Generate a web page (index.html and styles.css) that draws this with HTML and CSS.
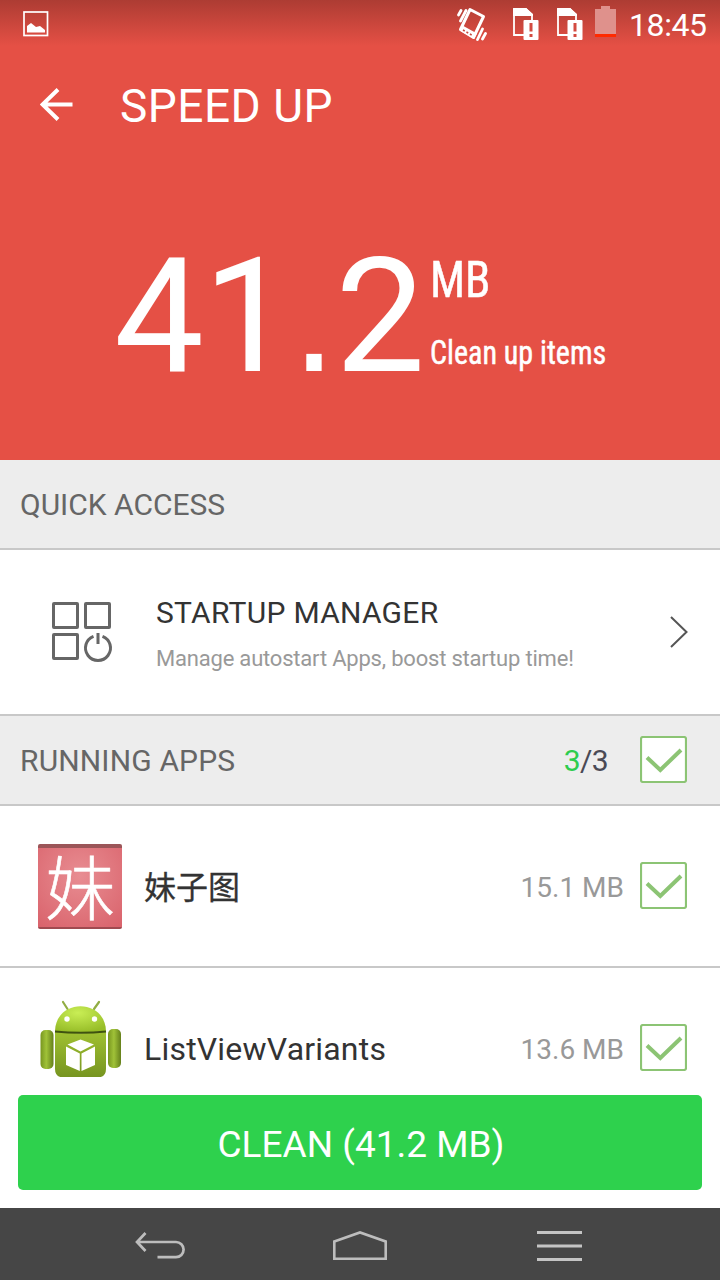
FILE: index.html
```html
<!DOCTYPE html>
<html lang="en">
<head>
    <meta charset="UTF-8">
    <meta name="viewport" content="width=device-width, initial-scale=1.0">
    <title>Speed Up</title>
    <link rel="stylesheet" href="styles.css">
</head>
<body>
    <!-- Check mark shared by all the checkboxes -->
    <svg class="defs" width="0" height="0">
        <symbol id="check" viewBox="0 0 47 47">
            <rect x="1" y="1" width="45" height="45" rx="2" fill="#fff" stroke="#8cc474" stroke-width="2.2"/>
            <path d="M7 21.5L20.3 34L41 14" fill="none" stroke="#8cc474" stroke-width="4"/>
        </symbol>
    </svg>

    <header class="top">
        <div class="status">
            <svg class="picture" width="26" height="26" viewBox="0 0 26 26">
                <rect x="1" y="1" width="23.5" height="23.5" fill="none" stroke="#fff" stroke-width="1.7"/>
                <path d="M4 21.5V15L8 12L13 16L17 15L22 19V21.5Z" fill="#fff"/>
            </svg>
            <svg class="vibrate" width="30" height="36" viewBox="0 0 30 36">
                <path d="M13 2.500L26.500 9.500L16.500 30.500L3.500 22.500Z" fill="none" stroke="#fff" stroke-width="3" stroke-linejoin="round"/>
                <path d="M5.500 18.500L20 26.500L17 32L2.500 23.500Z" fill="#fff"/>
                <path d="M6 23L15.500 28.500" stroke="#c8493f" stroke-width="1.500" stroke-dasharray="2 2"/>
                <path d="M1.500 8L4 3.500M3.500 14L9 3.500M20.500 32.500L25.500 22M25.500 32L28.500 26.500" stroke="#fff" stroke-width="2.800" stroke-linecap="round"/>
            </svg>
            <svg class="sim" width="26" height="33" viewBox="0 0 26 33">
                <path d="M1 28V2H13L19 8V28Z" fill="none" stroke="#fff" stroke-width="1.8"/>
                <path d="M0 2Q0 1 2 1H13L20 7V9H0Z" fill="#fff"/>
                <rect x="10.500" y="13" width="15" height="20" rx="1" fill="#fff"/>
                <path d="M18 16V24.500M18 27V30" stroke="#d34b41" stroke-width="3"/>
            </svg>
            <svg class="sim" width="26" height="33" viewBox="0 0 26 33">
                <path d="M1 28V2H13L19 8V28Z" fill="none" stroke="#fff" stroke-width="1.8"/>
                <path d="M0 2Q0 1 2 1H13L20 7V9H0Z" fill="#fff"/>
                <rect x="10.500" y="13" width="15" height="20" rx="1" fill="#fff"/>
                <path d="M18 16V24.500M18 27V30" stroke="#d34b41" stroke-width="3"/>
            </svg>
            <svg class="battery" width="21" height="31" viewBox="0 0 21 31">
                <path d="M0 3H6V0H15V3H21V28H0Z" fill="#df918c"/>
                <rect y="28" width="21" height="3" fill="#ff2a00"/>
            </svg>
            <span class="clock">18:45</span>
        </div>

        <div class="title-bar">
            <svg width="33" height="33" viewBox="0 0 33 33">
                <path d="M18 1.500L2.500 16.500L18 31.500M2.500 16.500H32.500" fill="none" stroke="#fff" stroke-width="4"/>
            </svg>
            <h1>SPEED UP</h1>
        </div>

        <div class="summary">
            <span class="amount">41<span class="point">.</span>2</span>
            <div class="labels">
                <span class="unit">MB</span>
                <span class="caption">Clean up items</span>
            </div>
        </div>
    </header>

    <main>
        <div class="section">
            <h2>QUICK ACCESS</h2>
        </div>

        <div class="startup">
            <svg class="startup-icon" width="62" height="62" viewBox="0 0 62 62" fill="none" stroke="#666" stroke-width="3">
                <rect x="1.500" y="2.500" width="24" height="24" rx=".5"/>
                <rect x="33.500" y="2.500" width="24" height="24" rx=".5"/>
                <rect x="1.500" y="33.500" width="24" height="24" rx=".5"/>
                <path d="M41.500 35.300A12.500 12.500 0 1 0 50.500 35.300M46 32V43"/>
            </svg>
            <div class="startup-text">
                <h3>STARTUP MANAGER</h3>
                <p>Manage autostart Apps, boost startup time!</p>
            </div>
            <svg width="18" height="32" viewBox="0 0 18 32">
                <path d="M1 1L16.500 16L1 31" fill="none" stroke="#555" stroke-width="2"/>
            </svg>
        </div>

        <div class="section running">
            <h2>RUNNING APPS</h2>
            <span class="count"><b>3</b>/3</span>
            <svg class="check"><use href="#check"/></svg>
        </div>

        <div class="app">
            <div class="app-icon meizi">妹</div>
            <span class="name name-cjk">妹子图</span>
            <span class="size">15.1 MB</span>
            <svg class="check"><use href="#check"/></svg>
        </div>

        <div class="app">
            <svg class="app-icon" width="84" height="84" viewBox="0 3 84 84">
                <defs>
                    <linearGradient id="body" x1="0" y1="0" x2="0" y2="1">
                        <stop offset="0" stop-color="#a0c131"/>
                        <stop offset="1" stop-color="#769420"/>
                    </linearGradient>
                    <radialGradient id="head" cx=".45" cy=".25" r=".75">
                        <stop offset="0" stop-color="#c9ee55"/>
                        <stop offset="1" stop-color="#97bd28"/>
                    </radialGradient>
                    <linearGradient id="arm" x1="0" y1="0" x2="1" y2="0">
                        <stop offset="0" stop-color="#789620"/>
                        <stop offset=".45" stop-color="#a0c238"/>
                        <stop offset="1" stop-color="#65801b"/>
                    </linearGradient>
                </defs>
                <path d="M25 -1L29.500 6M61 -1L56 6" stroke="#91ad43" stroke-width="2.2" stroke-linecap="round"/>
                <path d="M17 28C18 -5 67 -5 68 28Q43 31 17 28Z" fill="url(#head)"/>
                <circle cx="29" cy="16" r="2.700" fill="#fff"/>
                <circle cx="56.500" cy="16" r="2.700" fill="#fff"/>
                <rect x="2.500" y="27" width="13" height="39" rx="5" fill="url(#arm)"/>
                <rect x="70" y="26" width="13" height="39" rx="5" fill="url(#arm)"/>
                <path d="M17 28.500Q43 32 68 28.500V66Q68 74.500 59 74.500H26Q17 74.500 17 66Z" fill="url(#body)"/>
                <path d="M17 28.500Q43 31 68 28.500" fill="none" stroke="#3f5210" stroke-width="2"/>
                <path d="M29.500 41.500L42.500 36.500L56 41.500L42.500 48.500ZM28 43.500L41.800 50.500V68L28 62ZM43.500 50.500L57 43.500V62L43.500 68Z" fill="#fff"/>
            </svg>
            <span class="name">ListViewVariants</span>
            <span class="size">13.6 MB</span>
            <svg class="check"><use href="#check"/></svg>
        </div>
    </main>

    <div class="action">
        <button class="clean">CLEAN (41.2 MB)</button>
    </div>

    <nav class="nav">
        <svg width="51" height="30" viewBox="0 0 51 30">
            <path d="M10.500 2L2 11L10.500 20M2 11H41A7.600 7.600 0 0 1 41 26.200H22.500" fill="none" stroke="#bdbdbd" stroke-width="2.700"/>
        </svg>
        <svg class="home" width="54" height="30" viewBox="0 0 54 30">
            <path d="M1.300 10.500L27 1.500L52.700 10.500V27.700H1.300Z" fill="none" stroke="#bdbdbd" stroke-width="2.600"/>
        </svg>
        <svg width="45" height="32" viewBox="0 0 45 32">
            <path d="M0 2.500H45M0 16H45M0 29.500H45" stroke="#c4c4c4" stroke-width="3"/>
        </svg>
    </nav>
</body>
</html>
```

FILE: styles.css
```css
* {
    box-sizing: border-box;
}

body {
    display: flex;
    flex-direction: column;
    width: 720px;
    height: 1280px;
    margin: 0;
    overflow: hidden;
    background: #fff;
    font-family: Roboto, "Noto Sans CJK SC", sans-serif;
}

h1, h2, h3, p {
    margin: 0;
    font-weight: 400;
    white-space: nowrap;
}

svg {
    display: block;
    flex: none;
}

.defs {
    position: absolute;
}

/* Red header */
.top {
    height: 460px;
    flex: none;
    color: #fff;
    background: linear-gradient(#ad3c33 0, #e55045 46px, #e55045 100%);
}

.status {
    display: flex;
    height: 50px;
    padding: 7px 12px 0 23px;
}

.picture {
    margin: 4px auto 0 0;
}

.vibrate {
    margin-right: 26px;
}

.sim {
    margin: 0 18px 0 0;
}

.sim + .battery {
    margin: -1px 13px 0 -6px;
}

.clock {
    width: 79px;
    font-size: 32px;
    line-height: 36px;
    letter-spacing: -.4px;
    white-space: nowrap;
}

.title-bar {
    display: flex;
    align-items: center;
    height: 108px;
    padding-left: 40px;
}

.title-bar h1 {
    margin-left: 47px;
    padding-top: 3px;
    font-size: 46px;
    letter-spacing: .5px;
}

.summary {
    display: flex;
    padding: 64px 0 0 114px;
}

.amount {
    width: 316px;
    font-size: 160px;
    line-height: 190px;
    letter-spacing: -1px;
}

.point {
    font-family: "Liberation Sans", sans-serif;
    line-height: 1;
}

.labels {
    display: flex;
    flex-direction: column;
    align-items: flex-start;
    padding-top: 28px;
}

.unit, .caption {
    font-family: "Roboto Condensed", Roboto, sans-serif;
    white-space: nowrap;
    transform-origin: left;
    -webkit-text-stroke: .5px #fff;
}

.unit {
    font-size: 50px;
    line-height: 60px;
    transform: scaleX(.93);
}

.caption {
    margin-top: 23px;
    font-size: 33px;
    line-height: 40px;
    transform: scaleX(.91);
}

/* Lists */
main {
    height: 617px;
    flex: none;
    overflow: hidden;
}

.section {
    display: flex;
    align-items: center;
    height: 90px;
    padding: 0 33px 0 20px;
    background: #ededed;
    border-bottom: 2px solid #c8c8c8;
}

.section h2 {
    flex: 1;
    font-size: 30px;
    color: #666;
}

.running h2 {
    letter-spacing: .15px;
}

.startup {
    display: flex;
    align-items: center;
    height: 166px;
    padding: 0 32px 0 52px;
    border-bottom: 2px solid #c8c8c8;
}

.startup-text {
    flex: 1;
    padding: 6px 0 0 42px;
}

.startup-text h3 {
    font-size: 30px;
    line-height: 40px;
    letter-spacing: .28px;
    color: #333;
}

.startup-text p {
    margin-top: 8px;
    font-size: 22px;
    line-height: 36px;
    letter-spacing: -.2px;
    color: #999;
}

.count {
    margin-right: 32px;
    font-size: 30px;
    letter-spacing: -.6px;
    color: #4a4a55;
}

.count b {
    font-weight: 400;
    color: #2ecc4e;
}

.check {
    width: 47px;
    height: 47px;
    margin-bottom: 2px;
}

.app {
    display: flex;
    align-items: center;
    height: 162px;
    padding: 0 33px 0 38px;
    border-bottom: 2px solid #c8c8c8;
}

.app-icon {
    width: 84px;
    height: 84px;
    overflow: visible;
}

.meizi {
    height: 85px;
    border-top: 4px solid #9b5558;
    border-bottom: 2px solid #a04a50;
    border-radius: 2px;
    background: radial-gradient(circle at 50% 35%, #e88d92, #d9626b);
    color: #fff;
    font-family: "Noto Sans CJK SC", sans-serif;
    font-size: 70px;
    font-weight: 300;
    line-height: 73px;
    text-align: center;
    -webkit-text-stroke: .6px #fff;
}

.name {
    flex: 1;
    margin-left: 22px;
    padding-top: 2px;
    font-size: 32px;
    letter-spacing: .2px;
    color: #333;
}

.name-cjk {
    padding: 0 0 3px;
    letter-spacing: 0;
    -webkit-text-stroke: .3px #333;
}

.size {
    margin-right: 16px;
    padding-top: 2px;
    font-size: 28px;
    color: #999;
}

/* Bottom button and system keys */
.action {
    height: 131px;
    flex: none;
    padding: 18px;
    background: #fff;
}

.clean {
    width: 100%;
    height: 95px;
    padding: 3px 0 0 2px;
    border: 0;
    border-radius: 5px;
    background: #2ed14d;
    color: #fff;
    font-family: inherit;
    font-size: 37px;
}

.nav {
    display: flex;
    justify-content: space-between;
    align-items: center;
    height: 72px;
    flex: none;
    padding: 3px 138px 0 135px;
    background: #464646;
}

.home {
    margin: 0 2px 0 -2px;
}
```
